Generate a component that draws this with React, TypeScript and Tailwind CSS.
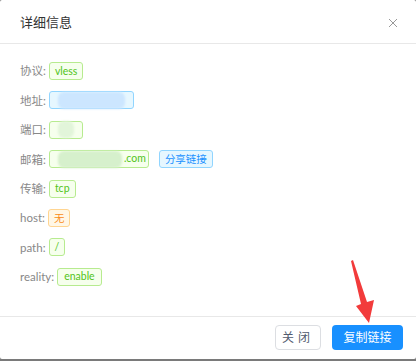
import React from 'react'

const font = { fontFamily: 'Lato, "Noto Sans CJK SC", sans-serif' }

type TagProps = { color: 'green' | 'blue' | 'orange'; children: React.ReactNode; className?: string }

function Tag({ color, children, className = '' }: TagProps) {
    const tone =
        color === 'green'
            ? 'border-[#b7eb8f] bg-[#f6ffed] text-[#52c41a]'
            : color === 'blue'
                ? 'border-[#91d5ff] bg-[#e6f7ff] text-[#1890ff]'
                : 'border-[#ffd591] bg-[#fff7e6] text-[#fa8c16]'
    return (
        <span className={`inline-flex h-[18px] items-center rounded-[3px] border px-[5px] text-[10.5px] leading-none ${tone} ${className}`}>
            {children}
        </span>
    )
}

function Row({ label, children }: { label: string; children: React.ReactNode }) {
    return (
        <div className="flex h-[18px] items-center gap-[3px]">
            <span className="text-[11.5px] text-[#888]">{label}</span>
            {children}
        </div>
    )
}

export default function App() {
    return (
        <div className="relative h-[361px] w-[416px] bg-[#7a7a7a]" style={font}>
            <div className="flex h-[359px] w-[416px] flex-col rounded-[2px] bg-white">
                <div className="flex h-[44px] items-center justify-between border-b border-[#e8e8e8] pl-5 pr-[18px] pt-[2px]">
                    <span className="text-[13px] text-[#333]">详细信息</span>
                    <svg width="10" height="10" viewBox="0 0 10 10" className="mt-[1px]">
                        <path d="M1 1 L9 9 M9 1 L1 9" stroke="#999" strokeWidth="1" fill="none" />
                    </svg>
                </div>

                <div className="flex flex-1 flex-col gap-[11.4px] pl-5 pt-[18px]">
                    <Row label="协议:">
                        <Tag color="green">vless</Tag>
                    </Row>
                    <Row label="地址:">
                        <span className="inline-flex h-[18px] w-[85px] items-center rounded-[3px] border border-[#91d5ff] bg-[#e6f7ff] px-[8px]">
                            <span className="h-[17px] w-[68px] rounded-[6px] bg-[#cce6ff] blur-[1px]"></span>
                        </span>
                    </Row>
                    <Row label="端口:">
                        <span className="inline-flex h-[18px] w-[34px] items-center justify-center rounded-[3px] border border-[#b7eb8f] bg-[#f6ffed]">
                            <span className="h-[17px] w-[16px] rounded-[6px] bg-[#e2f5da] blur-[1px]"></span>
                        </span>
                    </Row>
                    <Row label="邮箱:">
                        <span className="inline-flex h-[18px] w-[100px] items-center rounded-[3px] border border-[#b7eb8f] bg-[#f6ffed] pl-[8px] text-[10.5px] text-[#52c41a]">
                            <span className="h-[17px] w-[64px] rounded-[6px] bg-[#d6f0cc] blur-[1px]"></span>
                            <span className="ml-[2px]">.com</span>
                        </span>
                        <Tag color="blue" className="ml-[7px]">分享链接</Tag>
                    </Row>
                    <Row label="传输:">
                        <Tag color="green">tcp</Tag>
                    </Row>
                    <Row label="host:">
                        <Tag color="orange">无</Tag>
                    </Row>
                    <Row label="path:">
                        <Tag color="green">/</Tag>
                    </Row>
                    <Row label="reality:">
                        <Tag color="green" className="px-[6px]">enable</Tag>
                    </Row>
                </div>

                <div className="flex h-[43px] items-start justify-end gap-[11px] border-t border-[#e8e8e8] pr-[13px] pt-[8px]">
                    <button className="h-[25px] w-[46px] rounded-[4px] border border-[#dcdee2] bg-white text-[12px] tracking-[4px] text-[#515a6e]">
                        关闭
                    </button>
                    <button className="h-[25px] w-[71px] rounded-[4px] bg-[#1890ff] text-[12px] text-white">
                        复制链接
                    </button>
                </div>
            </div>

            <svg className="absolute left-0 top-0" width="416" height="361" viewBox="0 0 416 361">
                <polygon points="351,261 353,260 367,302 374,300 369,323 356,306 361,304" fill="#f23b3b" />
            </svg>
        </div>
    )
}
